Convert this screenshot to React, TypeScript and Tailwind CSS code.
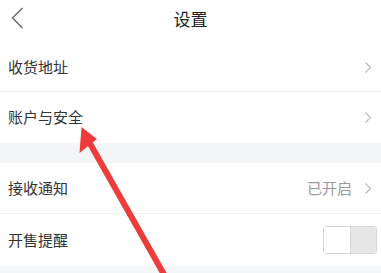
import React from "react";

const Chevron = () => (
  <svg width="8" height="13" viewBox="0 0 8 13" className="shrink-0">
    <path d="M1.5 1.5 L6.5 6.5 L1.5 11.5" fill="none" stroke="#bdbdbd" strokeWidth="1.3" />
  </svg>
);

const Row = ({ label, right, h, pr = "pr-[9px]" }: { label: string; right?: React.ReactNode; h: string; pr?: string }) => (
  <div className={`flex items-center justify-between pl-[8px] bg-white ${pr} ${h}`}>
    <span className="text-[15px] text-[#333]">{label}</span>
    {right}
  </div>
);

export default function App() {
  return (
    <div
      className="relative w-[381px] h-[273px] overflow-hidden bg-white"
      style={{ fontFamily: '"Noto Sans CJK SC", "Noto Sans", sans-serif' }}
    >
      <div className="relative flex items-center justify-center h-[36px]">
        <svg width="13" height="22" viewBox="0 0 13 22" className="absolute left-[11px] top-[7px]">
          <path d="M11.5 1 L1.5 11 L11.5 21" fill="none" stroke="#666" strokeWidth="1.4" />
        </svg>
        <span className="text-[17px] text-[#222] leading-none">设置</span>
      </div>
      <Row label="收货地址" h="h-[55px] pt-[7px]" right={<Chevron />} />
      <div className="h-px bg-[#f1f1f1]" />
      <Row label="账户与安全" h="h-[51px]" right={<Chevron />} />
      <div className="h-[20px] bg-[#f4f5f7]" />
      <Row
        label="接收通知"
        h="h-[50px]"
        right={
          <div className="flex items-center gap-[12px]">
            <span className="text-[15px] text-[#9a9a9a]">已开启</span>
            <Chevron />
          </div>
        }
      />
      <div className="h-px bg-[#f1f1f1]" />
      <Row
        label="开售提醒"
        h="h-[52px]"
        pr="pr-[4px]"
        right={
          <div className="flex w-[54px] h-[28px] rounded-[3px] border border-[#d6d6d6] overflow-hidden">
            <div className="w-[27px] bg-white border-r border-[#d6d6d6]" />
            <div className="flex-1 bg-[#e6e6e6]" />
          </div>
        }
      />
      <div className="h-[20px] bg-[#f4f5f7]" />
      <svg className="absolute left-0 top-0 pointer-events-none" width="381" height="273" viewBox="0 0 381 273">
        <line x1="88" y1="140" x2="166" y2="278" stroke="#ee3b3b" strokeWidth="6" />
        <polygon points="81.5,127 79.5,153 97,139" fill="#ee3b3b" />
      </svg>
    </div>
  );
}
